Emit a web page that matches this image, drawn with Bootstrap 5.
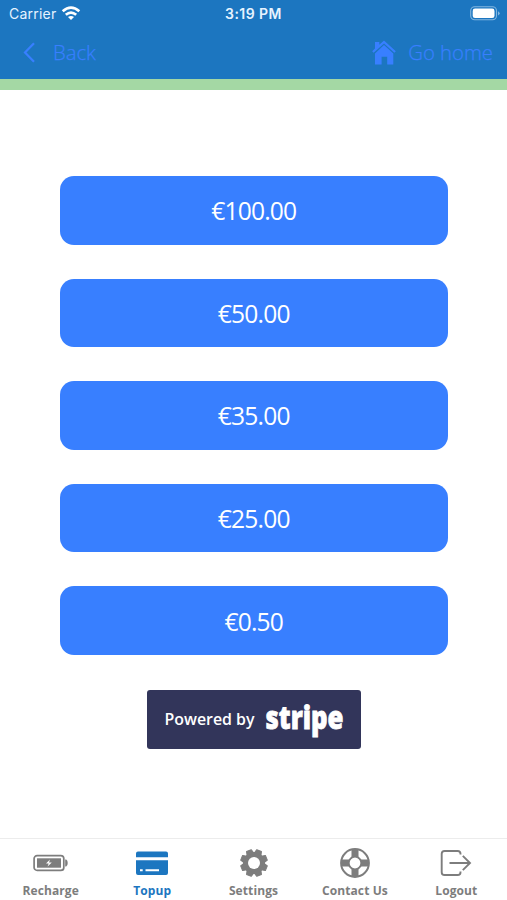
<!DOCTYPE html>
<html lang="en">
<head>
<meta charset="utf-8">
<meta name="viewport" content="width=device-width, initial-scale=1">
<title>Topup</title>
<link href="https://cdn.jsdelivr.net/npm/bootstrap@5.3.0/dist/css/bootstrap.min.css" rel="stylesheet">
<style>
body{font-family:"Open Sans",sans-serif;background:#fff;overflow:hidden}
svg{display:block;flex:none}
.topbar{height:90px;background:#1c76c0;border-bottom:11px solid #a4d8a4}
.status{height:28px;padding:0 7px 0 9px;font-family:Inter,sans-serif;color:#e6f3ff;line-height:28px}
.carrier{font-size:14px;letter-spacing:.22px;width:48px;white-space:nowrap}
.clock{font-size:14px;font-weight:600;letter-spacing:.45px;padding-right:2px}
.toolbar{height:50px;padding:0 14px 0 23px;font-weight:300;font-size:20.3px}
.toolbar a{color:#387fff;text-decoration:none}
.toolbar span{-webkit-text-stroke:.25px #387fff;line-height:48px;padding-bottom:2px}
.amounts{padding:86px 59px 0 59.5px;gap:34.1px}
.amount{height:68.5px;border-radius:14px;background:#387fff;color:#fff;border:0;font-size:24.6px;letter-spacing:-.8px;padding:3px 0 0;--bs-btn-hover-bg:#2f74f0;--bs-btn-hover-color:#fff}
.stripe-badge{width:214px;height:59px;margin-top:35px;background:#32355a;border-radius:3px;color:#fff}
.tabs{height:62px;border-top:1px solid #ececec;background:#fff}
.tabs a{color:#7d7d7d;text-decoration:none;font-size:12px;font-weight:700;line-height:16px;padding-top:8px;letter-spacing:.1px}
.tabs a.active{color:#1c76c0}
.tabs svg{margin-bottom:4px}
</style>
<script src="https://cdn.jsdelivr.net/npm/bootstrap@5.3.0/dist/js/bootstrap.bundle.min.js"></script>
</head>
<body class="vh-100 d-flex flex-column">
<header class="topbar">
  <div class="status row g-0 align-items-center">
    <div class="col d-flex align-items-center">
      <span class="carrier">Carrier</span>
      <svg class="ms-1" width="20" height="16" viewBox="0 0 20 16" fill="none" stroke="#fff" stroke-width="2.7"><path d="M1.7 5.3Q10-1.9 18.3 5.3M4.8 8.8Q10 4.4 15.2 8.8"/><path d="M7 11.1Q10 8.7 13 11.1L10 14.1Z" fill="#fff" stroke="none"/></svg>
    </div>
    <div class="col-auto clock">3:19 PM</div>
    <div class="col d-flex justify-content-end">
      <svg width="30" height="16" viewBox="0 0 30 16"><rect x=".7" y=".8" width="25.8" height="13" rx="4" fill="none" stroke="#83b6df" stroke-width="1.1"/><rect x="2.7" y="2.6" width="21.8" height="9.4" rx="2.3" fill="#fff"/><path d="M28 5.2v4.3q1.7-.7 1.7-2.15T28 5.2Z" fill="#83b6df"/></svg>
    </div>
  </div>
  <nav class="toolbar d-flex justify-content-between">
    <a href="#" class="d-flex align-items-center">
      <svg width="30" height="22" viewBox="0 0 30 22" fill="none" stroke="#387fff" stroke-width="2.2"><path d="M11 1.2 2 10.5l9 9.3"/></svg>
      <span>Back</span>
    </a>
    <a href="#" class="d-flex align-items-center">
      <svg width="36" height="26" viewBox="0 0 36 26" fill="#387fff"><path d="M.2 11.2 3 8.6V2h4.3v2.8L12 .6l11.8 10.6-1.4 1.5L12 3.4 1.6 12.7Z"/><path d="M12 4.9l9.3 8.5v11.1h-6.1v-7.8H9.6v7.8H3V13.4Z"/></svg>
      <span>Go home</span>
    </a>
  </nav>
</header>
<main class="flex-grow-1 d-flex flex-column align-items-center">
  <div class="amounts w-100 d-grid">
    <button class="btn amount">€100.00</button>
    <button class="btn amount">€50.00</button>
    <button class="btn amount">€35.00</button>
    <button class="btn amount">€25.00</button>
    <button class="btn amount">€0.50</button>
  </div>
  <div class="stripe-badge">
    <svg width="214" height="59" viewBox="0 0 214 59" fill="#fff" font-family="Open Sans, sans-serif"><text x="17.5" y="34.7" font-size="16" font-weight="600" textLength="90" lengthAdjust="spacingAndGlyphs">Powered by</text><text x="118.5" y="39" font-size="31.5" font-weight="800" stroke="#fff" stroke-width=".8" textLength="78" lengthAdjust="spacingAndGlyphs">stripe</text></svg>
  </div>
</main>
<nav class="tabs row g-0 text-center">
  <a href="#" class="col d-flex flex-column align-items-center">
    <svg width="36" height="32" viewBox="0 0 36 32"><rect x="1.1" y="8.6" width="29.7" height="14.8" rx="3" fill="none" stroke="#7d7d7d" stroke-width="1.7"/><rect x="4" y="11.3" width="24" height="9.4" fill="#7d7d7d"/><path d="M32.2 12.5h1q1.5.7 1.5 3.5t-1.5 3.5h-1Z" fill="#7d7d7d"/><path d="M17 12.6 13 16.4h2.7l-1.1 3.1 4.2-3.9h-2.8Z" fill="#fff"/></svg>Recharge</a>
  <a href="#" class="active col d-flex flex-column align-items-center">
    <svg width="34" height="32" viewBox="0 0 34 32" fill="#1c76c0"><path d="M1 10.2V6.5Q1 4.5 3 4.5H31q2 0 2 2v3.7ZM1 13.2H33V26q0 2-2 2H3q-2 0-2-2Z"/><path d="M5 23.3h2.7M10.5 23.3H24" stroke="#fff" stroke-width="2"/></svg>Topup</a>
  <a href="#" class="col d-flex flex-column align-items-center">
    <svg width="30" height="32" viewBox="-15 -16 30 32"><g fill="#7d7d7d" stroke="#7d7d7d" stroke-linejoin="round"><circle r="10.5"/><g id="teeth"><path id="tooth" d="M-3.7-9-2.5-13.4H2.5L3.7-9Z" transform="rotate(22.5)"/><use href="#tooth" transform="rotate(45)"/><use href="#tooth" transform="rotate(90)"/><use href="#tooth" transform="rotate(135)"/></g><use href="#teeth" transform="rotate(180)"/></g><circle r="6" fill="#fff"/></svg>Settings</a>
  <a href="#" class="col d-flex flex-column align-items-center">
    <svg width="32" height="32" viewBox="-16 -16 32 32"><circle r="13.9" fill="#fff" stroke="#7d7d7d" stroke-width="2"/><path d="M-3.5-14H3.5V-6.5L6.5-3.5H14V3.5H6.5L3.5 6.5V14H-3.5V6.5L-6.5 3.5H-14V-3.5H-6.5L-3.5-6.5Z" fill="#7d7d7d"/><circle r="6" fill="#fff" stroke="#7d7d7d" stroke-width="1.2"/></svg>Contact Us</a>
  <a href="#" class="col d-flex flex-column align-items-center">
    <svg width="32" height="32" viewBox="0 0 32 32" fill="none" stroke="#7d7d7d" stroke-width="1.9"><path d="M20.5 7.5V6.8Q20.5 4 17.7 4H4.5Q1.7 4 1.7 6.8V25.2Q1.7 28 4.5 28H17.7Q20.5 28 20.5 25.2V24.5M9.5 16H30M22.8 8.9 30 16l-7.2 7.1"/></svg>Logout</a>
</nav>
</body>
</html>
